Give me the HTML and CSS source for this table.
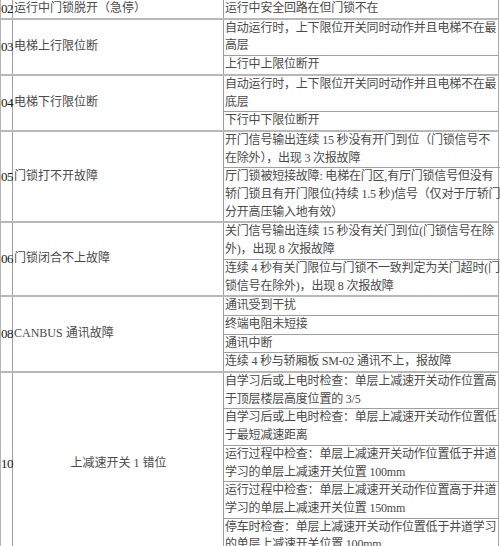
FILE: index.html
```html
<!DOCTYPE html>
<html lang="zh">
<head>
<meta charset="utf-8">
<link rel="stylesheet" href="styles.css">
</head>
<body>
<div class="tbl">
  <div class="grp">
    <div class="num">02</div>
    <div class="name">运行中门锁脱开（急停）</div>
    <div class="desc"><div class="sub">运行中安全回路在但门锁不在</div></div>
  </div>
  <div class="grp">
    <div class="num">03</div>
    <div class="name">电梯上行限位断</div>
    <div class="desc">
      <div class="sub">自动运行时，上下限位开关同时动作并且电梯不在最<br>高层</div>
      <div class="sub">上行中上限位断开</div>
    </div>
  </div>
  <div class="grp">
    <div class="num">04</div>
    <div class="name">电梯下行限位断</div>
    <div class="desc">
      <div class="sub">自动运行时，上下限位开关同时动作并且电梯不在最<br>底层</div>
      <div class="sub">下行中下限位断开</div>
    </div>
  </div>
  <div class="grp">
    <div class="num">05</div>
    <div class="name">门锁打不开故障</div>
    <div class="desc">
      <div class="sub">开门信号输出连续 15 秒没有开门到位（门锁信号不<br>在除外），出现 3 次报故障</div>
      <div class="sub">厅门锁被短接故障: 电梯在门区,有厅门锁信号但没有<br>轿门锁且有开门限位(持续 1.5 秒)信号（仅对于厅轿门<br>分开高压输入地有效）</div>
    </div>
  </div>
  <div class="grp">
    <div class="num">06</div>
    <div class="name">门锁闭合不上故障</div>
    <div class="desc">
      <div class="sub">关门信号输出连续 15 秒没有关门到位(门锁信号在除<br>外)，出现 8 次报故障</div>
      <div class="sub">连续 4 秒有关门限位与门锁不一致判定为关门超时(门<br>锁信号在除外)，出现 8 次报故障</div>
    </div>
  </div>
  <div class="grp">
    <div class="num">08</div>
    <div class="name">CANBUS 通讯故障</div>
    <div class="desc">
      <div class="sub">通讯受到干扰</div>
      <div class="sub">终端电阻未短接</div>
      <div class="sub">通讯中断</div>
      <div class="sub">连续 4 秒与轿厢板 SM-02 通讯不上，报故障</div>
    </div>
  </div>
  <div class="grp">
    <div class="num">10</div>
    <div class="name center">上减速开关 1 错位</div>
    <div class="desc">
      <div class="sub">自学习后或上电时检查：单层上减速开关动作位置高<br>于顶层楼层高度位置的 3/5</div>
      <div class="sub">自学习后或上电时检查：单层上减速开关动作位置低<br>于最短减速距离</div>
      <div class="sub">运行过程中检查：单层上减速开关动作位置低于井道<br>学习的单层上减速开关位置 100mm</div>
      <div class="sub">运行过程中检查：单层上减速开关动作位置高于井道<br>学习的单层上减速开关位置 150mm</div>
      <div class="sub">停车时检查：单层上减速开关动作位置低于井道学习<br>的单层上减速开关位置 100mm</div>
    </div>
  </div>
</div>
</body>
</html>
```

FILE: styles.css
```css
html, body {
  margin: 0;
  padding: 0;
  background: #ffffff;
}
body {
  font-family: "Liberation Serif", "Noto Sans CJK SC", serif;
  font-size: 12px;
  line-height: 17.7px;
  color: #4a4a4a;
}
.tbl {
  width: 497px;
  border-left: 1px solid #b4b4b4;
  border-right: 1px solid #a8a8a8;
}
.grp {
  display: grid;
  grid-template-columns: 12px 211px 1fr;
  border-bottom: 2px solid #b8b8b8;
}
.num {
  display: flex;
  align-items: center;
  color: #1a1a1a;
  font-size: 13px;
  border-right: 1px solid #a0a0a0;
  white-space: nowrap;
  letter-spacing: -0.5px;
}
.name {
  display: flex;
  align-items: center;
  padding-left: 1px;
  border-right: 1px solid #a0a0a0;
  white-space: nowrap;
}
.name.center {
  justify-content: center;
}
.desc {
  display: flex;
  flex-direction: column;
}
.sub {
  padding-left: 1px;
  border-bottom: 1px solid #a0a0a0;
  white-space: nowrap;
  letter-spacing: -0.2px;
}
.sub:last-child {
  border-bottom: none;
}
```
